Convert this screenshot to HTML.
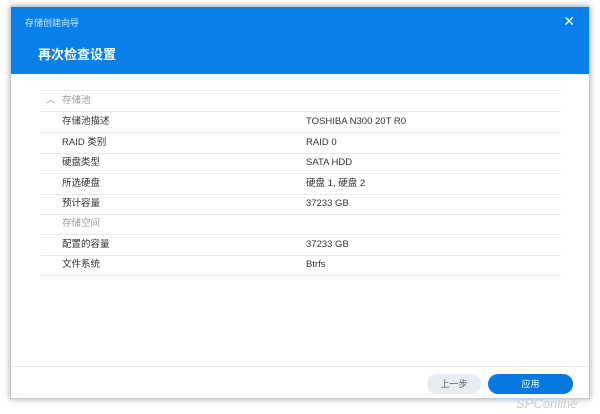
<!DOCTYPE html><html><head><style>
body{margin:0;width:600px;height:414px;background:#fff;position:relative;overflow:hidden;font-family:"Liberation Sans","Noto Sans CJK SC",sans-serif}
.dlg{position:absolute;left:10px;top:6px;width:580px;height:393px;background:#fff;box-shadow:0 0 6px rgba(0,0,0,.35);border:1px solid #c9ccd0;box-sizing:border-box}
.hd{position:absolute;left:0;top:0;right:0;height:67px;background:#0780ea;color:#fff}
.t1{position:absolute;left:14px;top:9px;font-size:9px;color:#dce9fb}
.x{position:absolute;right:14px;top:6px;font-size:14px}
.t2{position:absolute;left:27px;top:37px;font-size:13px;font-weight:bold}
.row{position:absolute;left:30px;width:520px;height:20px;border-bottom:1px solid #e6e9ed;font-size:9.5px;color:#333;line-height:20px}
.row .l{position:absolute;left:21px}.row .v{position:absolute;left:265px}
.sec{color:#999}
.ft{position:absolute;left:0;right:0;top:359px;border-top:1px solid #e6e9ed}
.b{position:absolute;top:367px;height:20px;border-radius:10px;font-size:9px;line-height:20px;text-align:center}
</style></head><body>
<div class="dlg">
<div class="hd"><div class="t1">存储创建向导</div><div class="x">✕</div><div class="t2">再次检查设置</div></div>
<div style="position:absolute;left:30px;top:83px;width:520px;border-top:1px solid #e6e9ed"></div>
<div class="row sec" style="top:84px"><span style="position:absolute;left:5px">︿</span><span class="l">存储池</span></div>
<div class="row" style="top:105px"><span class="l">存储池描述</span><span class="v">TOSHIBA N300 20T R0</span></div>
<div class="row" style="top:126px"><span class="l">RAID 类别</span><span class="v">RAID 0</span></div>
<div class="row" style="top:146px"><span class="l">硬盘类型</span><span class="v">SATA HDD</span></div>
<div class="row" style="top:167px"><span class="l">所选硬盘</span><span class="v">硬盘 1, 硬盘 2</span></div>
<div class="row" style="top:187px"><span class="l">预计容量</span><span class="v">37233 GB</span></div>
<div class="row sec" style="top:207px"><span class="l">存储空间</span></div>
<div class="row" style="top:228px"><span class="l">配置的容量</span><span class="v">37233 GB</span></div>
<div class="row" style="top:248px"><span class="l">文件系统</span><span class="v">Btrfs</span></div>
<div class="ft"></div>
<div class="b" style="left:416px;width:54px;background:#e8edf3;color:#555">上一步</div>
<div class="b" style="left:477px;width:85px;background:#0777e2;color:#fff">应用</div>
</div>
<div style="position:absolute;left:516px;top:396px;font-size:13px;color:#ccc;font-style:italic">SPConline</div>
</body></html>
